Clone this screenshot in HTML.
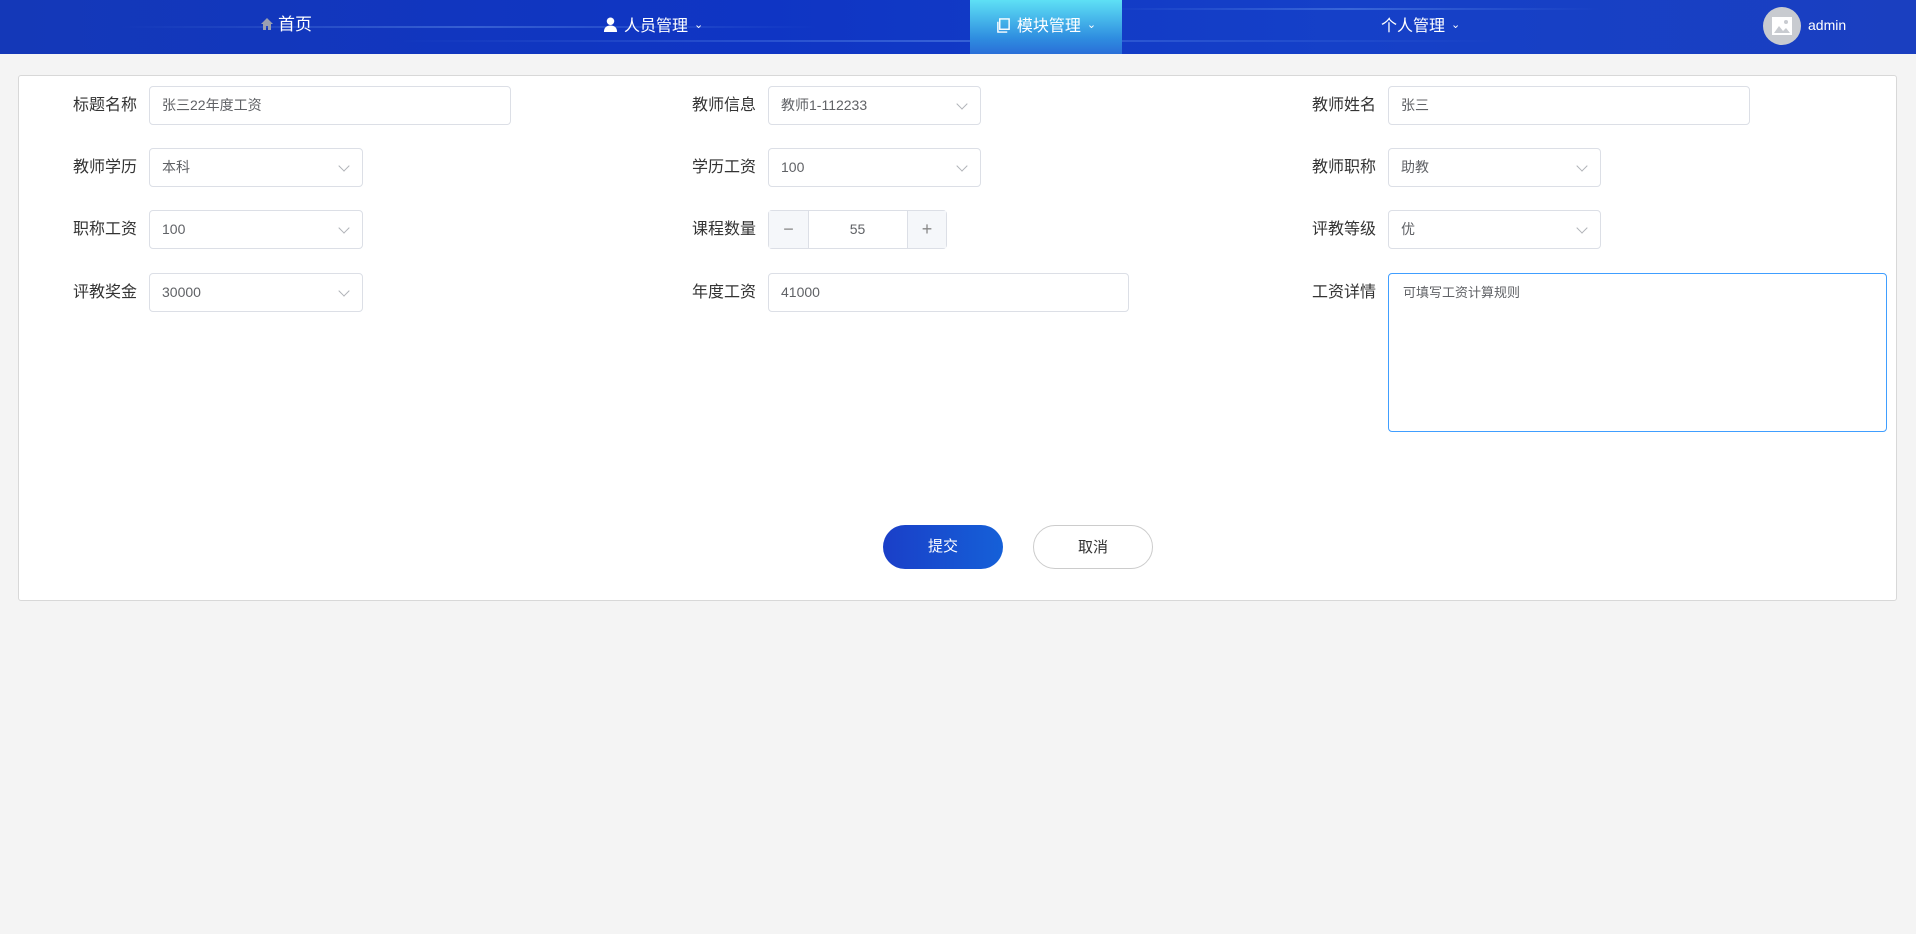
<!DOCTYPE html>
<html><head><meta charset="utf-8"><style>
*{box-sizing:border-box;margin:0;padding:0}
body{width:1916px;height:934px;background:#f4f4f4;font-family:"Liberation Sans","Noto Sans CJK SC",sans-serif;position:relative;overflow:hidden}
.hd{position:absolute;left:0;top:0;width:1916px;height:54px;background:linear-gradient(90deg,#1438b8 0%,#0f35c4 40%,#1540c8 70%,#1a3fc0 100%);overflow:hidden}
.hd .ln{position:absolute;height:2px;background:linear-gradient(90deg,rgba(120,170,255,0),rgba(140,190,255,.3),rgba(120,170,255,0))}
.nav{position:absolute;top:0;height:54px;line-height:50px;color:#fff;font-size:17px}
.act{background:linear-gradient(180deg,#5ee0f5,#2f8ee0 70%,#2a6ed8);}
.car{font-size:11px;margin-left:6px;vertical-align:3px}
.card{position:absolute;left:18px;top:75px;width:1879px;height:526px;background:#fff;border:1px solid #d8d8d8;border-radius:3px}
.lb{position:absolute;font-size:16px;color:#333;text-align:right;width:120px;line-height:39px}
.in{position:absolute;height:39px;border:1px solid #dcdfe6;border-radius:4px;font-size:14px;color:#606266;line-height:37px;padding-left:12px;background:#fff}
.sel::after{content:"";position:absolute;right:14px;top:13px;width:7px;height:7px;border-right:1px solid #b0b3b8;border-bottom:1px solid #b0b3b8;transform:rotate(45deg)}
.btn{position:absolute;top:525px;width:120px;height:44px;border-radius:22px;font-size:15px;text-align:center;line-height:44px}
</style></head><body>
<div class="hd">
<div class="ln" style="left:120px;top:26px;width:700px"></div>
<div class="ln" style="left:1100px;top:8px;width:500px"></div>
<div class="ln" style="left:400px;top:40px;width:1100px"></div>
<div class="nav" style="left:260px"><svg width="14" height="14" viewBox="0 0 14 14" style="vertical-align:-1px;margin-right:4px"><path d="M7 1L1 7h2v6h3v-4h2v4h3V7h2z" fill="#9aa0b0"/></svg>首页</div>
<div class="nav" style="left:603px;font-size:16px"><svg width="15" height="15" viewBox="0 0 16 16" style="vertical-align:-1px;margin-right:6px"><circle cx="8" cy="4.5" r="4" fill="#fff"/><path d="M1 16c0-5 3-7 7-7s7 2 7 7z" fill="#fff"/></svg>人员管理<span class="car">&#8964;</span></div>
<div class="nav act" style="left:970px;width:152px;text-align:center;font-size:16px"><svg width="15" height="15" viewBox="0 0 16 16" style="vertical-align:-2px;margin-right:6px"><rect x="4" y="1" width="10" height="11" fill="none" stroke="#fff" stroke-width="1.5"/><path d="M2 4v11h10" fill="none" stroke="#fff" stroke-width="1.5"/></svg>模块管理<span class="car">&#8964;</span></div>
<div class="nav" style="left:1381px;font-size:16px">个人管理<span class="car">&#8964;</span></div>
<div style="position:absolute;left:1763px;top:7px;width:38px;height:38px;border-radius:50%;background:#c8cbd0"><svg width="20" height="18" viewBox="0 0 20 18" style="position:absolute;left:9px;top:10px"><rect width="20" height="18" fill="#fff"/><path d="M2 16l5-7 4 5 3-3 4 5z" fill="#c8cbd0"/><circle cx="14" cy="5" r="2" fill="#c8cbd0"/></svg></div>
<div class="nav" style="left:1808px;font-size:14px;line-height:50px">admin</div>
</div>
<div class="card"></div>

<div class="lb" style="left:17px;top:86px">标题名称</div><div class="in" style="left:149px;top:86px;width:362px">张三22年度工资</div>
<div class="lb" style="left:636px;top:86px">教师信息</div><div class="in sel" style="left:768px;top:86px;width:213px">教师1-112233</div>
<div class="lb" style="left:1256px;top:86px">教师姓名</div><div class="in" style="left:1388px;top:86px;width:362px">张三</div>

<div class="lb" style="left:17px;top:148px">教师学历</div><div class="in sel" style="left:149px;top:148px;width:214px">本科</div>
<div class="lb" style="left:636px;top:148px">学历工资</div><div class="in sel" style="left:768px;top:148px;width:213px">100</div>
<div class="lb" style="left:1256px;top:148px">教师职称</div><div class="in sel" style="left:1388px;top:148px;width:213px">助教</div>

<div class="lb" style="left:17px;top:210px">职称工资</div><div class="in sel" style="left:149px;top:210px;width:214px">100</div>
<div class="lb" style="left:636px;top:210px">课程数量</div>
<div class="in" style="left:768px;top:210px;width:179px;padding:0;text-align:center">55
<div style="position:absolute;left:0;top:0;width:40px;height:37px;background:#f5f7fa;border-right:1px solid #dcdfe6;color:#888;font-size:18px">&minus;</div>
<div style="position:absolute;right:0;top:0;width:39px;height:37px;background:#f5f7fa;border-left:1px solid #dcdfe6;color:#888;font-size:18px">+</div></div>
<div class="lb" style="left:1256px;top:210px">评教等级</div><div class="in sel" style="left:1388px;top:210px;width:213px">优</div>

<div class="lb" style="left:17px;top:273px">评教奖金</div><div class="in sel" style="left:149px;top:273px;width:214px">30000</div>
<div class="lb" style="left:636px;top:273px">年度工资</div><div class="in" style="left:768px;top:273px;width:361px">41000</div>
<div class="lb" style="left:1256px;top:273px">工资详情</div>
<div class="in" style="left:1388px;top:273px;width:499px;height:159px;border-color:#409eff;line-height:normal;padding:8px 14px;font-size:13px">可填写工资计算规则</div>

<div class="btn" style="left:883px;background:linear-gradient(90deg,#1a3fc8,#1560d8);color:#fff">提交</div>
<div class="btn" style="left:1033px;border:1px solid #ccc;background:#fff;color:#333">取消</div>
</body></html>
